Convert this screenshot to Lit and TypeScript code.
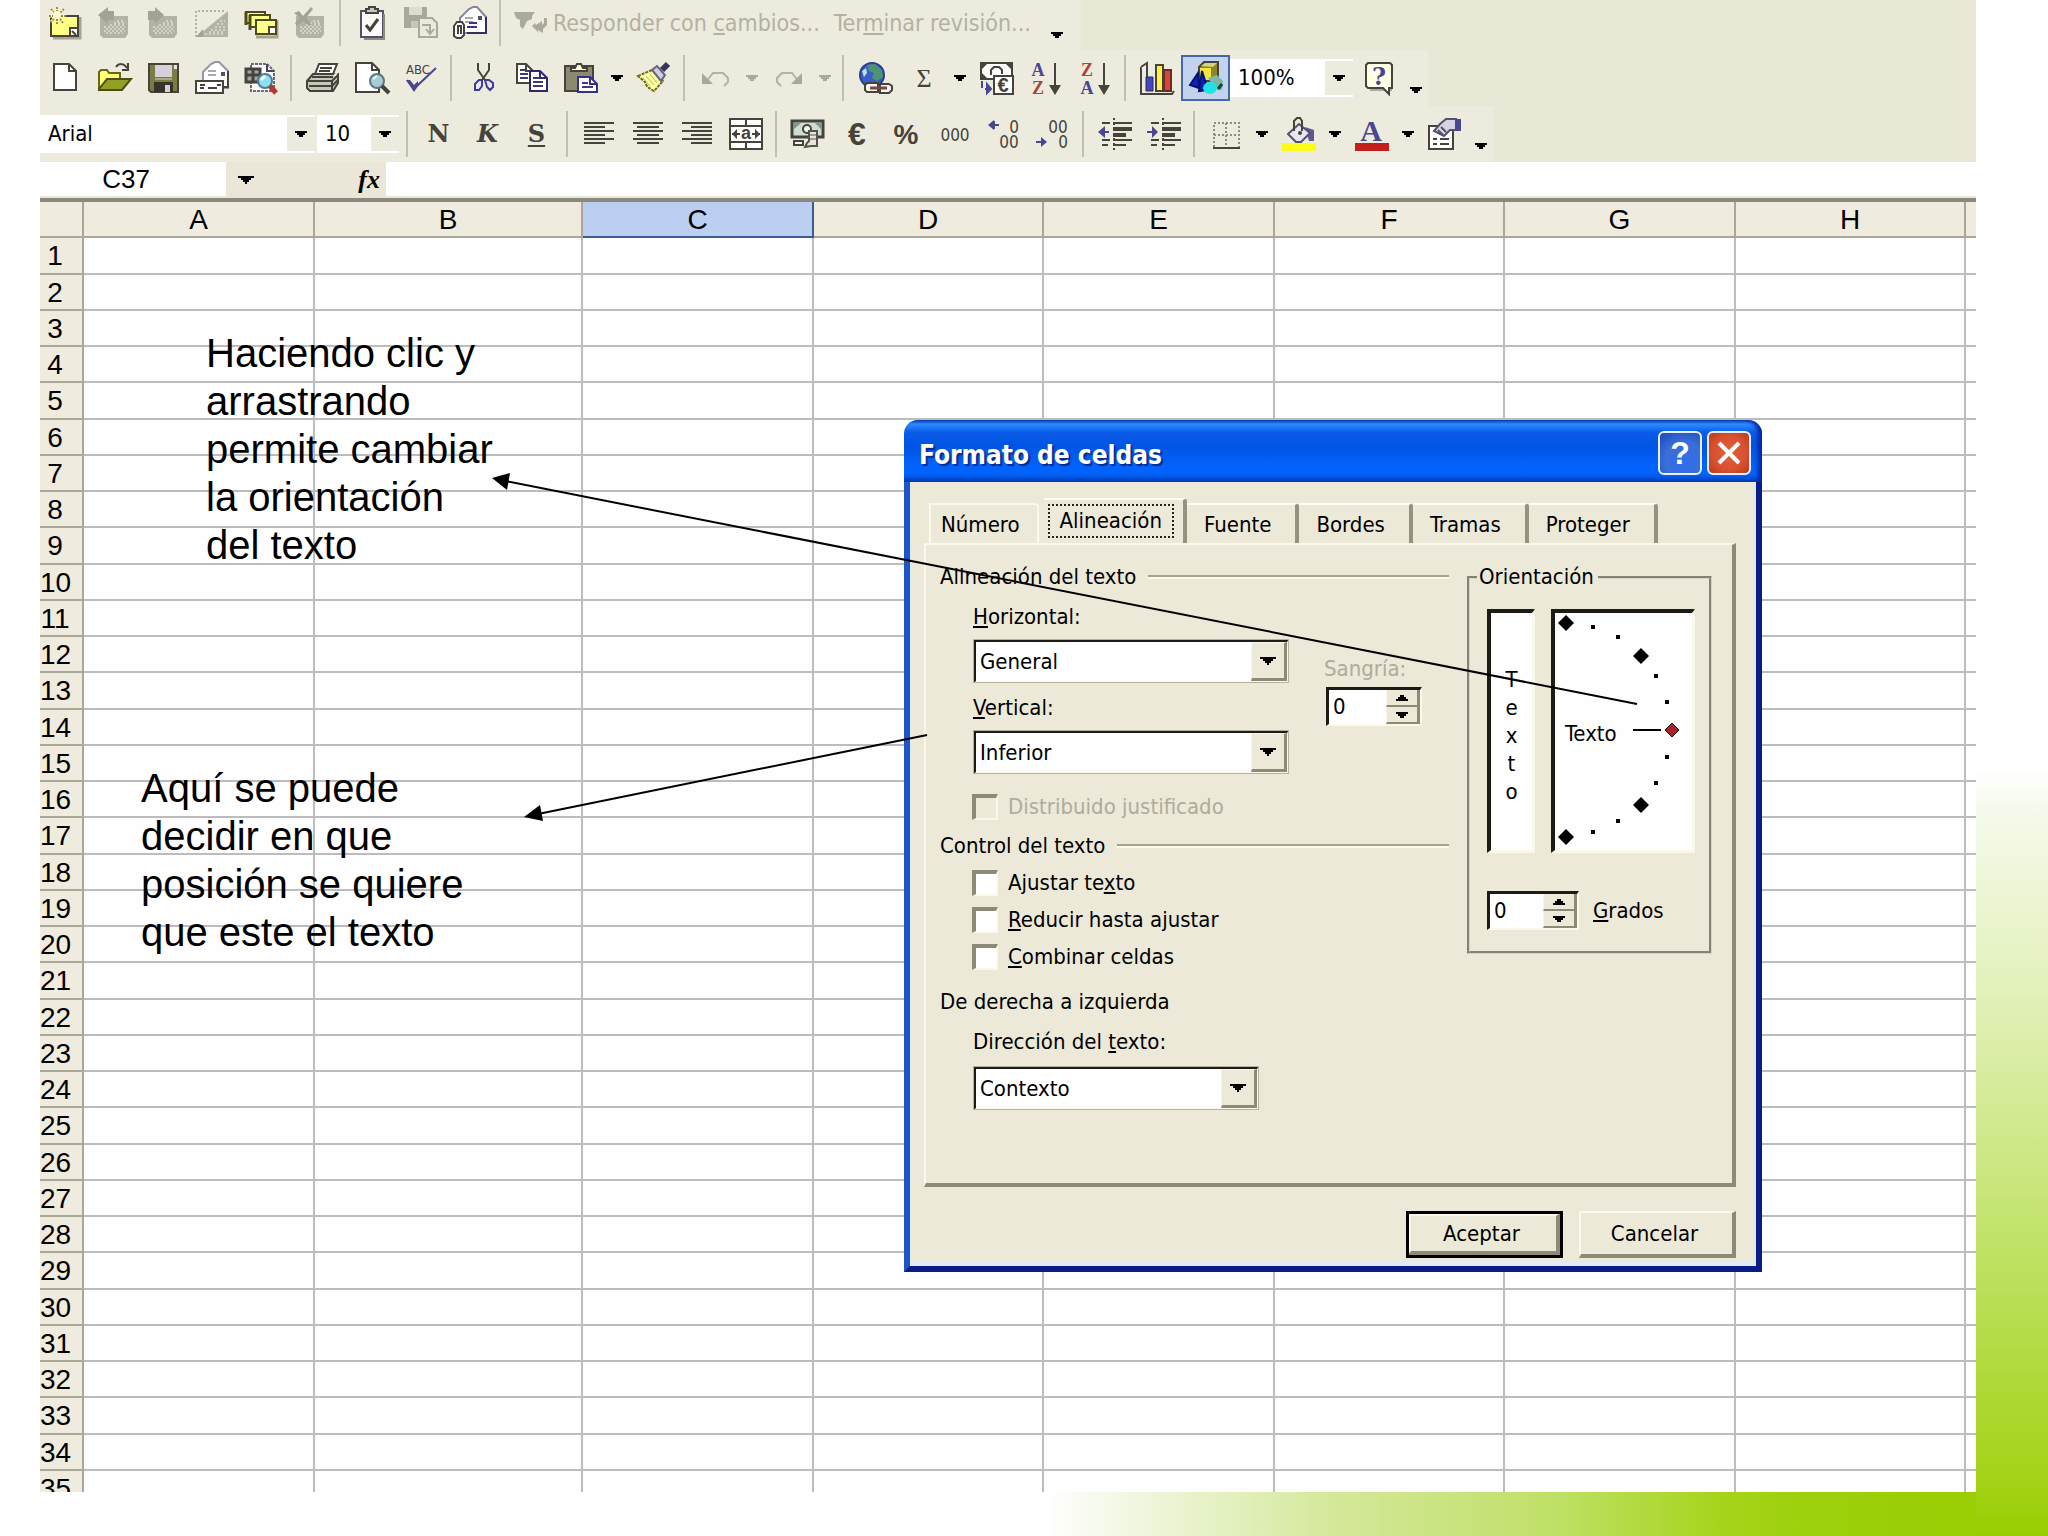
import { LitElement, html, svg, css, type SVGTemplateResult, type TemplateResult } from "lit";
import { customElement, property, state } from "lit/decorators.js";
import { classMap } from "lit/directives/class-map.js";

const uiFont = css`"DejaVu Sans Condensed", "DejaVu Sans", sans-serif`;
const gridFont = css`"Liberation Sans", Arial, sans-serif`;

const INK = "#45433a";
const OFF = "#b3b2a3";
const BLUE = "#4a4690";
const RED = "#a8453c";

/* Grey note card used by the disabled comment commands. */
const greyNote = (extra: SVGTemplateResult) => svg`
  <path d="M3 10H31V28L28 32H6L3 29Z" fill=${OFF}/>
  <path d="M7 21H28M9 23H28M7 25H28M9 27H26M13 19H28M17 17H28M20 15H28" stroke="#f4f3ea" stroke-width="1" stroke-dasharray="2 2"/>
  ${extra}`;

const page = (x: number, y: number, w: number, h: number, color = INK) => svg`
  <path d="M${x} ${y}H${x + w - 7}L${x + w} ${y + 7}V${y + h}H${x}Z" fill="#fff" stroke=${color} stroke-width="2"/>
  <path d="M${x + w - 7} ${y}V${y + 7}H${x + w}" fill="none" stroke=${color} stroke-width="2"/>`;

/* Letters that belong to an icon. */
const glyph = (x: number, y: number, cls: string, text: string, color = INK) =>
  svg`<text class=${cls} x=${x} y=${y} fill=${color} text-anchor="middle">${text}</text>`;

const ICONS: Record<string, SVGTemplateResult> = {
  newComment: svg`
    <path d="M5 32H32V11" fill="none" stroke="#a5a492" stroke-width="3"/>
    <path d="M3 10H30V30H3Z" fill="#ffff86" stroke=${INK} stroke-width="2"/>
    <path d="M22 22H30V30H22Z" fill="#fff" stroke=${INK} stroke-width="2"/>
    <path d="M24 25L28 29" stroke=${INK} stroke-width="2"/>
    <path d="M9 1V18M1 10H18M3 3L15 17M16 3L3 16" stroke="#fffbd0" stroke-width="3"/>
    <path d="M9 1V5M9 13V18M1 10H5M13 10H18M3 3L6 6M12 13L15 17M16 3L12 7M6 13L3 16" stroke="#a08c30" stroke-width="2" stroke-dasharray="2 1"/>`,
  prevComment: greyNote(svg`<path d="M1 9L11 1V5H17V14H11V18Z" fill="#a3a294"/>`),
  nextComment: greyNote(svg`<path d="M18 9L9 1V5H2V14H9V18Z" fill="#a3a294"/>`),
  showComment: svg`
    <path d="M33 5V31H1Z" fill=${OFF}/>
    <path d="M1 31V5H31" fill="none" stroke=${OFF} stroke-width="2" stroke-dasharray="2 2"/>
    <path d="M10 28H30M14 26H30M16 24H30M20 21H30M22 18H30M25 15H30" stroke="#f4f3ea" stroke-width="1" stroke-dasharray="2 2"/>
    <path d="M1 31L8 23V31Z" fill="#a3a294"/>`,
  allComments: svg`
    <path d="M12 31H33V14" fill="none" stroke="#a5a492" stroke-width="3"/>
    <path d="M2 6H21V17H2Z" fill="#ffff8c" stroke="#4c4a16" stroke-width="2"/>
    <path d="M6 9H26V21H6Z" fill="#ffff8c" stroke="#4c4a16" stroke-width="2"/>
    <path d="M12 14H32V28H12Z" fill="#ffff8c" stroke="#4c4a16" stroke-width="2"/>
    <path d="M25 21H32V28H25Z" fill="#fff" stroke="#4c4a16" stroke-width="2"/>
    <path d="M2 6V19M6 9V24" stroke="#4c4a16" stroke-width="3"/>`,
  deleteComment: greyNote(svg`<path d="M1 7L6 5L10 10L18 1L20 3L13 12L19 19L15 19L10 15L4 20L2 17L7 12Z" fill="#a3a294"/>`),
  task: svg`
    <path d="M6 5H28V31H6Z" fill="#fffafa" stroke="#55506a" stroke-width="2"/>
    <path d="M29 8V33H9" fill="none" stroke="#8e8c84" stroke-width="2"/>
    <path d="M11 3H14V1H20V3H23V7H11Z" fill="#c9c8c0" stroke=${INK} stroke-width="2"/>
    <path d="M11 19L15 24L23 13" fill="none" stroke=${INK} stroke-width="3"/>`,
  updateFile: svg`
    <path d="M0 1H23V22H0Z" fill="#a9a899"/>
    <path d="M5 1H18V9H5Z" fill="#dddccf"/><path d="M7 15H16V22H7Z" fill="#c7c6b8"/>
    <path d="M15 12H28L33 17V31H15Z" fill="#eceadd" stroke="#a9a899" stroke-width="2"/>
    <path d="M18 19H26V26M22 23L26 28L30 23" fill="none" stroke="#a9a899" stroke-width="2"/>`,
  mailAttach: svg`
    <path d="M7 12L16 3L20 1H24L33 11V27H7Z" fill="#fff" stroke="#8883a6" stroke-width="2"/>
    <path d="M33 11V27H14" fill="none" stroke="#34305c" stroke-width="2"/>
    <path d="M12 12H20M12 16H20" stroke="#aaa" stroke-width="2"/><path d="M14 21H24M16 17H24" stroke="#3c3880" stroke-width="2"/>
    <path d="M25 10H29V14H25Z" fill="#55506a"/>
    <path d="M1 30V20L4 16H9L11 19V29L8 32H4Z" fill="#fff" stroke=${INK} stroke-width="2"/>
    <path d="M5 28V20H8V28" fill="none" stroke=${INK} stroke-width="2"/>`,
  reply: svg`
    <path d="M1 6H22L19 10V13L14 15L10 23L7 20V14L3 12Z" fill="#aaa99a"/>
    <path d="M34 12V19L30 23V27L20 21L29 15V19L31 17V12Z" fill="#aaa99a"/>
    <path d="M19 20L22 17L26 27Z" fill="#aaa99a"/>`,
  file: page(6, 3, 22, 26),
  open: svg`
    <path d="M2 28V11L4 9H10L12 12H23V28Z" fill="#ffff74" stroke="#66681c" stroke-width="2"/>
    <path d="M2 28L10 18H34L25 29H2Z" fill="#93a024" stroke="#4c4e14" stroke-width="2"/>
    <path d="M19 6C22 2 27 2 30 7M31 2V9H25" fill="none" stroke=${INK} stroke-width="2"/>`,
  save: svg`
    <path d="M3 3H32V31H5L3 29Z" fill="#7d7c45" stroke=${INK} stroke-width="2"/>
    <path d="M9 4H26V16H9Z" fill="#d6d0dc"/><path d="M28 4H31V8H28Z" fill="#e8e5ea"/>
    <path d="M8 21H27V31H8Z" fill="#35332a"/><path d="M19 24H24V31H19Z" fill="#d6d0dc"/>
    <path d="M9 18H26" stroke="#a9a880" stroke-width="2"/>`,
  mail: svg`
    <path d="M8 11L16 3L20 1H24L33 10V27H8Z" fill="#fff" stroke="#9894a6" stroke-width="2"/>
    <path d="M33 10V26H28" fill="none" stroke=${INK} stroke-width="2"/>
    <path d="M13 10H21M13 14H21" stroke="#aaa" stroke-width="2"/><path d="M26 11H30V15H26Z" fill="#55506a"/>
    <path d="M1 20H28V32H1Z" fill="#fff" stroke=${INK} stroke-width="2"/>
    <path d="M5 24H10M5 27H9M13 27H22M22 24H26" stroke=${INK} stroke-width="2"/>`,
  search: svg`
    <path d="M7 3H23L30 10V30H7Z" fill="#fff" stroke="#6d6a78" stroke-width="2" stroke-dasharray="3 1"/>
    <path d="M23 3V10H30" fill="none" stroke="#45436a" stroke-width="2"/>
    <path d="M2 8H16V21H2Z" fill="#a4a3ac" stroke=${INK} stroke-width="3"/><path d="M9 8V21M2 14H16" stroke=${INK} stroke-width="3"/>
    <circle cx="21" cy="20" r="7" fill="#8fe0ee" stroke="#4b7f95" stroke-width="2"/>
    <path d="M17 19L21 15" stroke="#fff" stroke-width="3"/>
    <path d="M26 25L32 32" stroke="#b0392f" stroke-width="5"/>`,
  print: svg`
    <path d="M9 13L13 3H31L27 13Z" fill="#fff" stroke=${INK} stroke-width="2"/>
    <path d="M14 7H26M13 10H24" stroke=${INK} stroke-width="2"/>
    <path d="M1 20L7 13H32V22L27 30H4L1 27Z" fill="#c9c7ba" stroke=${INK} stroke-width="2"/>
    <path d="M2 20H26L32 14M3 25H26L32 19M26 20V29M6 16H27" fill="none" stroke=${INK} stroke-width="2"/>
    <path d="M28 15L31 12" stroke="#eee" stroke-width="2"/>`,
  preview: svg`
    ${page(1, 2, 23, 29)}
    <circle cx="22" cy="20" r="7" fill="#a9ccd4" stroke="#5a7785" stroke-width="2"/>
    <path d="M18 18L22 15" stroke="#e6f6fa" stroke-width="2"/>
    <path d="M27 25L34 32" stroke=${INK} stroke-width="4"/>`,
  spelling: svg`
    ${glyph(14, 13, "abc", "ABC")}
    <path d="M3 19L10 28L14 24L32 7" fill="none" stroke="#4a468e" stroke-width="2"/>
    <path d="M2 19H6L10 24L14 20V25L10 31Z" fill="#4a468e"/>`,
  cut: svg`
    <path d="M12 2V9L19 19M23 2V9L16 19" fill="none" stroke=${INK} stroke-width="2"/>
    <path d="M16 19H13L9 23V29H13L16 25ZM19 19L21 26L24 29L27 26V22L23 19Z" fill="#e8e8fb" stroke="#3d3a98" stroke-width="2"/>`,
  copy: svg`
    ${page(2, 3, 16, 19)}
    <path d="M5 9H11M5 13H13M5 17H13" stroke="#3d3a70" stroke-width="2"/>
    ${page(15, 10, 17, 20, "#2c2970")}
    <path d="M18 17H24M18 21H28M18 25H28" stroke="#3d3a70" stroke-width="2"/>`,
  paste: svg`
    <path d="M1 5H29V30H1Z" fill="#8b8a70" stroke=${INK} stroke-width="2"/>
    <path d="M7 10V7H11L13 3H17L19 7H23V10Z" fill="#fffde0" stroke=${INK} stroke-width="2"/>
    ${page(14, 16, 19, 15, "#35318c")}
    <path d="M18 22H24M18 26H29" stroke="#3d3a90" stroke-width="2"/>`,
  brush: svg`
    <path d="M1 15L15 9L26 20L17 30Q9 26 8 21Z" fill="#ffffa4" stroke="#6c6a1c" stroke-width="2" stroke-dasharray="3 1"/>
    <path d="M9 15L17 24M13 13L20 22M6 17L13 25" stroke="#b8b560" stroke-width="1"/>
    <path d="M15 9L20 5L28 14L24 20Z" fill="#d0cde0" stroke="#66637c" stroke-width="2"/>
    <path d="M25 9L31 3" stroke="#37345c" stroke-width="6"/>`,
  undo: svg`
    <path d="M7 21L14 12H24L29 17V21L25 25" fill="none" stroke=${OFF} stroke-width="2"/>
    <path d="M3 12V23H14Z" fill="#a9a899"/>`,
  redo: svg`
    <path d="M27 21L20 12H10L5 17V21L9 25" fill="none" stroke=${OFF} stroke-width="2"/>
    <path d="M30 12V23H19Z" fill="#a9a899"/>`,
  globe: svg`
    <circle cx="14" cy="14" r="12" fill="#3a5fc4" stroke="#2b3f8a" stroke-width="2"/>
    <path d="M9 4L17 3L24 9L25 16L19 20L14 17L16 12L11 10Z" fill="#4d9473"/><path d="M4 10L8 7L9 12L6 16Z" fill="#bcdcf2"/>
    <path d="M9 22H20V31H9L7 29V24ZM22 23H31L34 25V29L31 32H22Z" fill="#f4f3ec" stroke=${INK} stroke-width="2"/>
    <path d="M12 27H29" stroke="#7d4545" stroke-width="3"/>`,
  sum: glyph(17, 26, "sum", "Σ"),
  euroConvert: svg`
    <path d="M1 2H32V18H1Z" fill="#fff" stroke=${INK} stroke-width="2"/>
    <path d="M2 3H7L2 8ZM31 3H26L31 8ZM2 17H7L2 12Z" fill=${INK}/>
    <path d="M11 14V9L14 6H19L22 9V13" fill="none" stroke=${INK} stroke-width="2"/>
    <path d="M14 15H33V33H14Z" fill="#fff" stroke=${INK} stroke-width="2"/>
    ${glyph(23, 31, "euro-small", "€")}
    <path d="M2 20V27M5 28H10M7 23L11 28L7 32Z" fill=${BLUE} stroke=${BLUE} stroke-width="2"/>`,
  sortAsc: svg`
    ${glyph(9, 15, "sort", "A", BLUE)}${glyph(9, 33, "sort", "Z", RED)}
    <path d="M26 2V26" stroke=${INK} stroke-width="2"/><path d="M20 24H32L26 34Z" fill=${INK}/>`,
  sortDesc: svg`
    ${glyph(9, 15, "sort", "Z", RED)}${glyph(9, 33, "sort", "A", BLUE)}
    <path d="M26 2V26" stroke=${INK} stroke-width="2"/><path d="M20 24H32L26 34Z" fill=${INK}/>`,
  chart: svg`
    <path d="M1 6V33H32L34 30" fill="none" stroke=${INK} stroke-width="2"/>
    <path d="M1 6L7 2V16" fill="#eee" stroke=${INK} stroke-width="2"/>
    <path d="M6 16H13V30H6Z" fill="#4746b8" stroke="#25246c" stroke-width="1"/>
    <path d="M16 4H23V30H16Z" fill="#fff04a" stroke=${INK} stroke-width="2"/>
    <path d="M24 9H31V30H24Z" fill="#d8453c" stroke="#6e2b26" stroke-width="2"/>`,
  drawing: svg`
    <path d="M10 6L15 1H29V15L24 20H10Z" fill="#8c862a" stroke=${INK} stroke-width="2"/>
    <path d="M11 7H22V19H11Z" fill="#f0e63c"/><path d="M12 5L16 2H28L24 6Z" fill="#d8d47c"/>
    <path d="M1 24L9 12L10 27ZM10 30L13 10L19 29Z" fill="#0b22c4" stroke="#071270" stroke-width="2"/>
    <path d="M19 17L28 14L34 20L33 29L26 28Z" fill="#7fb5a6"/>
    <path d="M29 28L33 23" stroke="#0a4a40" stroke-width="3"/>
    <ellipse cx="21" cy="27" rx="7" ry="6" fill="#21e3e6"/>`,
  help: svg`
    <path d="M7 29H28V6" stroke="#aaa" stroke-width="2" fill="none"/>
    <path d="M5 2H27L29 4V27H26V33L20 27H5L3 25V4Z" fill="#ffffe6" stroke=${INK} stroke-width="2"/>
    ${glyph(16, 24, "ask", "?", BLUE)}`,
  alignLeft: svg`<path d="M2 6H32M2 10H23M2 14H32M2 18H23M2 22H32M2 26H23" stroke=${INK} stroke-width="2"/>`,
  alignCenter: svg`<path d="M2 6H32M6 10H28M2 14H32M6 18H28M2 22H32M6 26H28" stroke=${INK} stroke-width="2"/>`,
  alignRight: svg`<path d="M2 6H32M11 10H32M2 14H32M11 18H32M2 22H32M11 26H32" stroke=${INK} stroke-width="2"/>`,
  merge: svg`
    <path d="M1 2H33V32H1ZM1 9H33M1 25H33M17 2V9M17 25V32" fill="#fff" stroke=${INK} stroke-width="2"/>
    <path d="M3 17L8 12V22ZM31 17L26 12V22Z" fill=${INK}/><path d="M3 17H11M23 17H31" stroke=${INK} stroke-width="2"/>
    ${glyph(17, 22, "merge", "a")}`,
  currency: svg`
    <path d="M1 4H32V20H1Z" fill="#cfdcd2" stroke=${INK} stroke-width="3"/>
    <path d="M3 6L10 6L3 12ZM30 6L24 6L30 12Z" fill="#7d978a"/>
    <circle cx="16" cy="12" r="4" fill="#f4f3ea" stroke=${INK} stroke-width="2"/>
    <path d="M18 14H26V29H20L14 30L16 26L18 24Z" fill="#e8e6dc" stroke="#55534a" stroke-width="2"/>
    <path d="M19 18H25M19 22H25" stroke="#55534a" stroke-width="1"/>
    <path d="M3 24H12V28H3Z" fill="#f4f3ea" stroke=${INK} stroke-width="2"/>`,
  euro: glyph(17, 28, "euro", "€"),
  percent: glyph(17, 27, "percent", "%"),
  thousands: glyph(17, 24, "digits", "000"),
  moreDecimals: svg`
    <path d="M4 8H12M7 4V12" stroke=${BLUE} stroke-width="2"/><path d="M1 8L7 3V13Z" fill=${BLUE}/>
    ${glyph(27, 16, "digits", "0")}${glyph(22, 31, "digits", "00")}`,
  lessDecimals: svg`
    <path d="M0 25H8" stroke=${BLUE} stroke-width="2"/><path d="M11 25L5 20V30Z" fill=${BLUE}/>
    ${glyph(22, 16, "digits", "00")}${glyph(27, 31, "digits", "0")}`,
  outdent: svg`
    <path d="M4 6H12M15 6H34M4 23H12M15 23H34M4 28H10M15 28H28" stroke=${INK} stroke-width="2"/>
    <path d="M15 12H34M15 18H28" stroke=${INK} stroke-width="4"/><path d="M16 1V34" stroke=${INK} stroke-width="2" stroke-dasharray="2 3"/>
    <path d="M0 15L7 9V21Z" fill=${BLUE}/><path d="M4 15H11" stroke=${BLUE} stroke-width="2"/>`,
  indent: svg`
    <path d="M4 6H12M15 6H34M4 23H12M15 23H34M4 28H10M15 28H28" stroke=${INK} stroke-width="2"/>
    <path d="M15 12H34M15 18H28" stroke=${INK} stroke-width="4"/><path d="M16 1V34" stroke=${INK} stroke-width="2" stroke-dasharray="2 3"/>
    <path d="M11 15L5 9V21Z" fill=${BLUE}/><path d="M0 15H6" stroke=${BLUE} stroke-width="2"/>`,
  borders: svg`
    <path d="M5 30V6H30V30M17 6V30M5 18H30" fill="none" stroke="#8e8c80" stroke-width="2" stroke-dasharray="2 2"/>
    <path d="M4 31H31" stroke=${INK} stroke-width="2"/>`,
  bucket: svg`
    <path d="M0 26H34V34H0Z" fill="#fcfc1c"/>
    <path d="M23 10L32 13V24H27Z" fill="#5c5894"/>
    <path d="M6 17L17 7L28 16L19 25H14Z" fill="#e8e6f2" stroke="#55516e" stroke-width="2"/>
    <path d="M12 14V4L15 1H18L20 4V14" fill="none" stroke=${INK} stroke-width="2"/><circle cx="18" cy="16" r="2" fill=${INK}/>`,
  fontColor: svg`
    ${glyph(16, 24, "font-color", "A", BLUE)}
    <path d="M0 26H34V34H0Z" fill="#c2201c"/>`,
  props: svg`
    <path d="M1 9H25V32H1Z" fill="#fff" stroke=${INK} stroke-width="2"/>
    <path d="M5 22H9M12 22H21M5 27H9M12 27H21" stroke=${INK} stroke-width="2"/>
    <path d="M6 14L12 7L18 2H28V13H22L16 19Z" fill="#d7d4e0" stroke="#55516e" stroke-width="2"/>
    <path d="M30 2V14" stroke=${BLUE} stroke-width="6"/><path d="M10 13L15 18M13 10L18 15" stroke="#55516e" stroke-width="2"/>`,
};

const caret = (color = "#000") => html`<svg class="caret" viewBox="0 0 12 6" aria-hidden="true">
  <path d="M0 0H12V2H10V4H8V6H4V4H2V2H0Z" fill=${color} /></svg>`;

type Item =
  | { kind: "icon"; icon: string; name: string; off?: boolean; on?: boolean }
  | { kind: "drop"; name: string; off?: boolean }
  | { kind: "letter"; text: string; style: string; name: string }
  | { kind: "text"; content: TemplateResult; icon?: string }
  | { kind: "combo"; id: string; name: string; value: string }
  | { kind: "more"; name: string }
  | { kind: "sep" };

const icon = (i: string, name: string, extra: { off?: boolean; on?: boolean } = {}): Item => ({ kind: "icon", icon: i, name, ...extra });
const drop = (name: string, off = false): Item => ({ kind: "drop", name, off });
const SEP: Item = { kind: "sep" };

const REVIEW: Item[] = [
  icon("newComment", "Nuevo comentario"),
  icon("prevComment", "Comentario anterior", { off: true }),
  icon("nextComment", "Comentario siguiente", { off: true }),
  icon("showComment", "Mostrar comentario", { off: true }),
  icon("allComments", "Mostrar todos los comentarios"),
  icon("deleteComment", "Eliminar comentario", { off: true }),
  SEP,
  icon("task", "Crear tarea"),
  icon("updateFile", "Actualizar archivo", { off: true }),
  icon("mailAttach", "Enviar como datos adjuntos"),
  SEP,
  { kind: "text", icon: "reply", content: html`Responder con <u>c</u>ambios...` },
  { kind: "text", content: html`Ter<u>m</u>inar revisión...` },
  { kind: "more", name: "Opciones de revisión" },
];

const STANDARD: Item[] = [
  icon("file", "Nuevo"), icon("open", "Abrir"), icon("save", "Guardar"), icon("mail", "Correo"), icon("search", "Buscar"),
  SEP,
  icon("print", "Imprimir"), icon("preview", "Vista preliminar"), icon("spelling", "Ortografía"),
  SEP,
  icon("cut", "Cortar"), icon("copy", "Copiar"), icon("paste", "Pegar"), drop("Opciones de pegado"), icon("brush", "Copiar formato"),
  SEP,
  icon("undo", "Deshacer", { off: true }), drop("Lista de deshacer", true), icon("redo", "Rehacer", { off: true }), drop("Lista de rehacer", true),
  SEP,
  icon("globe", "Hipervínculo"), icon("sum", "Autosuma"), drop("Funciones"), icon("euroConvert", "Conversión a euros"),
  icon("sortAsc", "Orden ascendente"), icon("sortDesc", "Orden descendente"),
  SEP,
  icon("chart", "Asistente para gráficos"), icon("drawing", "Dibujo", { on: true }),
  { kind: "combo", id: "zoom", name: "Zoom", value: "100%" },
  icon("help", "Ayuda"),
  { kind: "more", name: "Opciones estándar" },
];

const FORMAT: Item[] = [
  { kind: "combo", id: "font", name: "Fuente", value: "Arial" },
  { kind: "combo", id: "size", name: "Tamaño", value: "10" },
  SEP,
  { kind: "letter", text: "N", style: "bold", name: "Negrita" },
  { kind: "letter", text: "K", style: "italic", name: "Cursiva" },
  { kind: "letter", text: "S", style: "under", name: "Subrayado" },
  SEP,
  icon("alignLeft", "Alinear a la izquierda"), icon("alignCenter", "Centrar"), icon("alignRight", "Alinear a la derecha"), icon("merge", "Combinar y centrar"),
  SEP,
  icon("currency", "Moneda"), icon("euro", "Euro"), icon("percent", "Porcentual"), icon("thousands", "Estilo millares"),
  icon("moreDecimals", "Aumentar decimales"), icon("lessDecimals", "Disminuir decimales"),
  SEP,
  icon("outdent", "Disminuir sangría"), icon("indent", "Aumentar sangría"),
  SEP,
  icon("borders", "Bordes"), drop("Tipos de borde"), icon("bucket", "Color de relleno"), drop("Colores de relleno"),
  icon("fontColor", "Color de fuente"), drop("Colores de fuente"), icon("props", "Propiedades"),
  { kind: "more", name: "Opciones de formato" },
];

@customElement("tool-bar")
class ToolBar extends LitElement {
  @property({ attribute: false }) items: Item[] = [];

  static styles = css`
    :host { display: flex; align-items: center; height: 56px; background: #edebdd; font: 22px/30px ${uiFont}; color: #000; }
    button { appearance: none; border: 0; margin: 0; padding: 0; background: none; font: inherit; color: inherit; flex: none; }
    .icon { width: 49px; height: 46px; display: grid; place-items: center; }
    .icon svg, .text svg { width: 34px; height: 34px; display: block; overflow: visible; }
    .abc { font-size: 13px; font-weight: 400; }
    .sum { font: 26px "Liberation Serif", serif; }
    .sort { font: bold 18px "Liberation Serif", serif; }
    .digits { font-size: 17px; }
    .percent { font: bold 28px ${gridFont}; }
    .euro { font: bold 32px ${gridFont}; }
    .euro-small { font: bold 20px ${gridFont}; }
    .merge { font: bold 18px ${gridFont}; }
    .ask { font: bold 24px "DejaVu Serif", serif; }
    .font-color { font: bold 30px "Liberation Serif", serif; }
    .on { background: #c3d2ee; border: 2px solid #4468a8; }
    .drop { width: 24px; height: 46px; display: grid; place-items: center; }
    .more { width: 24px; height: 46px; display: grid; place-items: end center; padding-bottom: 8px; }
    .caret { width: 12px; height: 6px; display: block; }
    .sep { width: 2px; height: 46px; margin: 0 6px 0 5px; background: #c1bfb1; flex: none; }
    .text { display: flex; align-items: center; color: #b3b1a2; font-size: 23px; height: 46px; margin-right: 14px; white-space: nowrap; }
    .text svg { margin: 0 6px; }
    .letter { width: 49px; height: 46px; font: bold 24px/30px "DejaVu Serif", serif; color: #45433a; }
    .italic { font-style: italic; }
    .under { text-decoration: underline; text-decoration-thickness: 2px; text-underline-offset: 3px; }
    .combo { display: grid; grid-template-columns: 1fr 28px; align-items: center; height: 38px; background: #fff; margin-right: 2px; flex: none; }
    .combo select { grid-area: 1 / 1 / 2 / 3; appearance: none; border: 0; margin: 0; padding: 0 0 0 8px; background: none; font: inherit; color: inherit; height: 38px; width: 100%; }
    .knob { grid-area: 1 / 2; height: 34px; background: #edebdd; display: grid; place-items: center; pointer-events: none; }
    .font { width: 275px; }
    .size { width: 82px; }
    .zoom { width: 123px; }
  `;

  private item(i: Item) {
    switch (i.kind) {
      case "icon":
        return html`<button class=${classMap({ icon: true, on: !!i.on })} aria-label=${i.name} ?disabled=${!!i.off}>
          <svg viewBox="0 0 34 34" aria-hidden="true">${ICONS[i.icon]}</svg></button>`;
      case "drop":
        return html`<button class="drop" aria-label=${i.name} ?disabled=${!!i.off}>${caret(i.off ? "#aaa99a" : "#000")}</button>`;
      case "letter":
        return html`<button class="letter ${i.style}" aria-label=${i.name}>${i.text}</button>`;
      case "text":
        return html`<button class="text" disabled>
          ${i.icon ? html`<svg viewBox="0 0 34 34" aria-hidden="true">${ICONS[i.icon]}</svg>` : ""}<span>${i.content}</span></button>`;
      case "combo":
        return html`<div class="combo ${i.id}"><select aria-label=${i.name}><option>${i.value}</option></select>
          <span class="knob">${caret()}</span></div>`;
      case "more":
        return html`<button class="more" aria-label=${i.name}>${caret()}</button>`;
      default:
        return html`<span class="sep"></span>`;
    }
  }

  render() {
    return this.items.map((i) => this.item(i));
  }
}

@customElement("sheet-grid")
class SheetGrid extends LitElement {
  @property({ type: Number }) rows = 35;
  @property() selected = "C";
  private columns = ["A", "B", "C", "D", "E", "F", "G", "H"];

  static styles = css`
    :host { display: block; overflow: hidden; background: #fefefe; }
    table { width: 100%; border-collapse: separate; border-spacing: 0; table-layout: fixed; font: 28px/30px ${gridFont}; color: #000; }
    col { width: 231px; }
    col:nth-child(odd) { width: 230px; }
    col.gutter { width: 44px; }
    col.wide { width: 268px; }
    col.rest { width: auto; }
    th, td { box-sizing: border-box; padding: 0; border: 0 solid #bcbbbe; border-width: 0 2px 2px 0; overflow: hidden; }
    tr { height: 36px; }
    tbody tr:nth-child(4n + 1) { height: 37px; }
    th { font-weight: 400; background: #efecdf; border-color: #a9a798; padding-top: 1px; }
    tbody th { padding-right: 12px; }
    .sel { background: #bdcff0; border-color: #3e5c94; }
    td:last-child, thead th:last-child { border-right: 0; }
  `;

  render() {
    const numbers = Array.from({ length: this.rows }, (_, i) => i + 1);
    return html`<table>
      <colgroup>
        <col class="gutter" />
        ${this.columns.map((c) => html`<col class=${classMap({ wide: c === "B" })} />`)}
        <col class="rest" />
      </colgroup>
      <thead><tr><th></th>
        ${this.columns.map((c) => html`<th scope="col" class=${classMap({ sel: c === this.selected })}>${c}</th>`)}<th></th>
      </tr></thead>
      <tbody>${numbers.map((n) => html`<tr><th scope="row">${n}</th>${this.columns.map(() => html`<td></td>`)}<td></td></tr>`)}</tbody>
    </table>`;
  }
}

const TABS = ["Número", "Alineación", "Fuente", "Bordes", "Tramas", "Proteger"];
const DIAMONDS = [[15, 14], [90, 47], [90, 196], [15, 228]];
const DOTS = [[42, 18], [67, 28], [105, 67], [116, 93], [116, 148], [105, 174], [67, 212], [42, 223]];

@customElement("format-dialog")
class FormatDialog extends LitElement {
  @state() private tab = "Alineación";

  static styles = css`
    :host { display: block; font: 22px/30px ${uiFont}; color: #000; }
    button, input, select { appearance: none; font: inherit; color: inherit; margin: 0; padding: 0; border: 0; border-radius: 0; box-sizing: border-box; }
    .title { display: flex; align-items: center; gap: 5px; height: 62px; box-sizing: border-box; padding: 4px 11px 0 15px; border-radius: 14px 14px 0 0;
      background: linear-gradient(#0a4cc0, #2f8cff 4px, #0b5ce8 12px, #0054e3 26px, #0263fc 46px, #0263fc 54px, #0440c0); box-shadow: inset -4px 0 4px #0626a0; }
    h2 { flex: 1; margin: 0; padding-top: 4px; font-size: 26px; line-height: 32px; font-weight: 700; color: #fff; text-shadow: 2px 2px 1px #0a2a8c; }
    .cap { width: 44px; height: 44px; border: 2px solid #e8f0ff; border-radius: 6px; display: grid; place-items: center; }
    .cap svg { width: 28px; height: 28px; }
    .cap text { font: bold 32px ${gridFont}; }
    .ask { background: radial-gradient(circle at 60% 70%, #2f6cf0, #3a6fd8 50%, #1c48b8); }
    .close { background: radial-gradient(circle at 50% 50%, #e2603c, #d9502f 60%, #b83a1c); }
    .frame { border: 6px solid #0b1c84; border-top: 0; border-left-color: #1e55c8; background: #ece9d8; box-shadow: inset 2px 0 #dfeafa, inset 0 -4px #dfeafa, inset -2px 0 #dfeafa; padding: 16px 20px 8px 14px; }
    .tabs { display: flex; align-items: flex-end; padding-left: 5px; }
    .tab { height: 40px; padding: 2px 24px 0 17px; background: none; border-top: 2px solid #fffef4; border-right: 4px solid #94917e; border-top-right-radius: 4px; }
    .tab.first { padding: 2px 17px 0 10px; border: 2px solid #fbf9ea; border-width: 2px 2px 0 2px; margin-right: 5px; }
    .tab.active { height: 45px; padding: 3px 9px 4px 4px; }
    .tab.active span { display: block; padding: 0 10px; border: 2px dotted #222; }
    .panel { display: grid; grid-template-columns: 1fr 245px; column-gap: 18px; align-items: start; box-sizing: border-box; min-height: 644px; padding: 17px 20px 0 14px;
      border: solid; border-width: 2px 4px 4px 2px; border-color: #fbf9ea #8d8a76 #8d8a76 #fbf9ea; }
    .group { display: flex; align-items: center; gap: 12px; }
    .group.ruled::after { content: ""; flex: 1; height: 2px; background: #a5a290; border-bottom: 2px solid #fbf9ea; }
    .indent { padding-left: 33px; }
    .pair { display: flex; gap: 35px; padding-top: 10px; }
    .fields { width: 316px; display: flex; flex-direction: column; }
    .fields label + .combo { margin-top: 7px; }
    .fields .combo + label { margin-top: 10px; }
    .side { padding-top: 52px; color: #aeac9c; }
    .side .spin { color: #000; margin: 3px 0 0 2px; }
    .combo { display: grid; grid-template-columns: 1fr 36px; height: 44px; background: #fff; box-sizing: border-box; border: solid; border-width: 3px 2px 2px 3px; border-color: #1c1b16 #fbf9ea #fbf9ea #1c1b16; outline: 1px solid #b5b29f; outline-offset: -1px; }
    .combo select { grid-area: 1 / 1 / 2 / 3; background: none; padding-left: 4px; width: 100%; }
    .knob { grid-area: 1 / 2; display: grid; place-items: center; pointer-events: none; background: #ece9d8; border: solid; border-width: 1px 3px 3px 1px; border-color: #f8f6e8 #8d8a76 #8d8a76 #f8f6e8; }
    .caret { display: block; width: 16px; height: 8px; }
    .spin { display: grid; grid-template-columns: 1fr 34px; grid-template-rows: 1fr 1fr; width: 96px; height: 39px; box-sizing: border-box; background: #fff; border: solid; border-width: 3px 2px 2px 3px; border-color: #1c1b16 #fbf9ea #fbf9ea #1c1b16; }
    .spin input { grid-row: 1 / 3; width: 100%; padding-left: 4px; background: none; appearance: textfield; }
    .spin input::-webkit-inner-spin-button { display: none; }
    .spin button { display: grid; place-items: center; background: #ece9d8; border: solid; border-width: 0 3px 2px 1px; border-color: #f8f6e8 #8d8a76 #8d8a76 #f8f6e8; }
    .spin svg { width: 12px; height: 6px; display: block; }
    .check { display: flex; align-items: center; gap: 10px; margin-top: 7px; padding-left: 32px; }
    .check input { width: 26px; height: 26px; background: #fff; border: solid; border-width: 4px 2px 2px 4px; border-color: #8d8a76 #fbf9ea #fbf9ea #8d8a76; }
    .off { color: #aeac9c; margin-top: 18px; }
    .off input { background: #ece9d8; }
    .control { margin-top: 9px; }
    .rtl { margin-top: 15px; }
    .dir { padding-top: 10px; display: flex; flex-direction: column; gap: 9px; }
    .dir .combo { width: 286px; }
    fieldset { margin: 0; min-width: 0; padding: 17px 14px 21px 17px; border: 3px groove #d8d5c2; box-sizing: border-box; }
    legend { padding: 0 4px 0 2px; margin-left: -10px; }
    .dials { display: flex; gap: 16px; height: 244px; }
    .well { background: #fefefe; border: solid; border-width: 4px 3px 3px 4px; border-color: #1c1b16 #fbf9ea #fbf9ea #1c1b16; box-sizing: border-box; }
    .vertical { width: 48px; display: flex; flex-direction: column; justify-content: center; align-items: center; line-height: 28px; padding-top: 8px; }
    .dial { flex: 1; }
    .dial svg { display: block; overflow: visible; }
    .degrees { display: flex; align-items: center; gap: 14px; padding-top: 38px; }
    .degrees .spin { width: 92px; }
    .actions { display: flex; justify-content: flex-end; gap: 16px; padding-top: 24px; }
    .push { width: 157px; height: 47px; background: #ece9d8; border: solid; border-width: 2px 4px 4px 2px; border-color: #fbf9ea #8d8a76 #8d8a76 #fbf9ea; padding-right: 4px; }
    .push.main { outline: 3px solid #000; outline-offset: -3px; border-width: 5px 7px 7px 5px; }
  `;

  private bigCaret = html`<svg class="caret" viewBox="0 0 16 8" aria-hidden="true"><path d="M0 0H16V2H13V4H11V6H9V8H7V6H5V4H3V2H0Z" /></svg>`;

  private combo(id: string, value: string) {
    return html`<div class="combo"><select id=${id}><option>${value}</option></select><span class="knob">${this.bigCaret}</span></div>`;
  }

  private spin(id: string, off = false) {
    return html`<div class="spin"><input id=${id} type="number" value="0" />
      <button aria-label="Aumentar" ?disabled=${off}><svg viewBox="0 0 12 6"><path d="M0 6H12V4H10V2H8V0H4V2H2V4H0Z" fill="#000" /></svg></button>
      <button aria-label="Disminuir" ?disabled=${off}><svg viewBox="0 0 12 6"><path d="M0 0H12V2H10V4H8V6H4V4H2V2H0Z" fill="#000" /></svg></button></div>`;
  }

  private check(id: string, label: TemplateResult, off = false) {
    return html`<div class=${classMap({ check: true, off })}><input type="checkbox" id=${id} ?disabled=${off} /><label for=${id}>${label}</label></div>`;
  }

  render() {
    return html`
      <header class="title">
        <h2>Formato de celdas</h2>
        <button class="cap ask" aria-label="Ayuda"><svg viewBox="0 0 28 28"><text x="14" y="25" text-anchor="middle" fill="#fff">?</text></svg></button>
        <button class="cap close" aria-label="Cerrar"><svg viewBox="0 0 28 28"><path d="M4 4L24 24M24 4L4 24" stroke="#fff" stroke-width="4" /></svg></button>
      </header>
      <div class="frame">
        <div class="tabs" role="tablist">
          ${TABS.map((t, i) => html`<button role="tab" aria-selected=${t === this.tab ? "true" : "false"}
            class=${classMap({ tab: true, first: i === 0, active: t === this.tab })}><span>${t}</span></button>`)}
        </div>
        <div class="panel">
          <div>
            <div class="group ruled">Alineación del texto</div>
            <div class="pair indent">
              <div class="fields">
                <label for="h"><u>H</u>orizontal:</label>${this.combo("h", "General")}
                <label for="v"><u>V</u>ertical:</label>${this.combo("v", "Inferior")}
              </div>
              <div class="side"><label for="s">Sangría:</label>${this.spin("s", true)}</div>
            </div>
            ${this.check("dj", html`Distribuido justificado`, true)}
            <div class="group ruled control">Control del texto</div>
            ${this.check("aj", html`Ajustar te<u>x</u>to`)}
            ${this.check("re", html`<u>R</u>educir hasta ajustar`)}
            ${this.check("co", html`<u>C</u>ombinar celdas`)}
            <div class="group rtl">De derecha a izquierda</div>
            <div class="dir indent"><label for="d">Dirección del <u>t</u>exto:</label>${this.combo("d", "Contexto")}</div>
          </div>
          <fieldset>
            <legend>Orientación</legend>
            <div class="dials">
              <div class="well vertical">${"Texto".split("").map((c) => html`<span>${c}</span>`)}</div>
              <div class="well dial">
                <svg width="134" height="236" viewBox="4 4 134 236">
                  ${DIAMONDS.map(([x, y]) => svg`<path d="M${x - 8} ${y}L${x} ${y - 8}L${x + 8} ${y}L${x} ${y + 8}Z" />`)}
                  ${DOTS.map(([x, y]) => svg`<path d="M${x - 2} ${y - 2}h4v4h-4Z" />`)}
                  <path d="M82 121H110" stroke="#000" stroke-width="2" />
                  <path d="M114 121L121 114L128 121L121 128Z" fill="#a3242a" stroke="#1c0a0a" stroke-width="1" />
                  <text x="14" y="132">Texto</text>
                </svg>
              </div>
            </div>
            <div class="degrees">${this.spin("g")}<label for="g"><u>G</u>rados</label></div>
          </fieldset>
        </div>
        <div class="actions"><button class="push main">Aceptar</button><button class="push">Cancelar</button></div>
      </div>`;
  }
}

@customElement("app-root")
class AppRoot extends LitElement {
  static styles = css`
    :host { display: flex; flex-direction: column; position: relative; box-sizing: border-box; height: 100vh; padding: 0 72px 44px 40px; overflow: hidden;
      background:
        linear-gradient(#fff 50%, #f4faea 53%, #e2f0b8 65%, #c9e67c 77%, #b4dc48 87%, #a2d214 97%, #99cc00) right / 72px 100% no-repeat,
        linear-gradient(90deg, #fff 51%, #eef6dc 56%, #d5e89a 65%, #bfe066 76%, #a6d41c 84%, #9ed00c 88%, #99cc00) bottom / 100% 44px no-repeat,
        #fff; }
    .bars { background: #e9e8d7; display: flex; flex-direction: column; align-items: flex-start; }
    .review { height: 50px; padding-right: 12px; align-items: flex-start; }
    .formula { display: grid; grid-template-columns: 186px 40px 120px 1fr; align-items: center; height: 36px; background: #ebe7d8; border-bottom: 4px solid #8b897e; font: 26px/30px ${gridFont}; }
    .formula input { box-sizing: border-box; width: 100%; height: 34px; border: 0; margin: 0; padding: 0; background: #fff; font: inherit; color: #000; align-self: start; }
    .formula .name { text-align: center; padding-right: 14px; }
    .formula button { border: 0; margin: 0; padding: 0; background: none; display: grid; place-items: center; height: 34px; }
    .formula .fx { font: italic bold 26px/30px "Liberation Serif", serif; justify-content: end; padding-right: 6px; color: #000; }
    .formula svg { width: 16px; height: 8px; }
    sheet-grid { flex: 1; min-height: 0; }
    .note { position: absolute; margin: 0; font: 40px/48px ${gridFont}; color: #000; white-space: pre-line; }
    .first { left: 206px; top: 329px; }
    .second { left: 141px; top: 764px; }
    format-dialog { position: absolute; left: 904px; top: 420px; width: 858px; }
    .arrows { position: absolute; left: 0; top: 0; width: 100%; height: 100%; pointer-events: none; }
  `;

  render() {
    return html`
      <div class="bars">
        <tool-bar class="review" .items=${REVIEW}></tool-bar>
        <tool-bar .items=${STANDARD}></tool-bar>
        <tool-bar .items=${FORMAT}></tool-bar>
      </div>
      <div class="formula">
        <input class="name" aria-label="Cuadro de nombres" value="C37" />
        <button aria-label="Lista de nombres"><svg viewBox="0 0 16 8"><path d="M0 0H16V2H13V4H11V6H9V8H7V6H5V4H3V2H0Z" /></svg></button>
        <button class="fx" aria-label="Insertar función">fx</button>
        <input aria-label="Barra de fórmulas" />
      </div>
      <sheet-grid></sheet-grid>
      <p class="note first">${"Haciendo clic y\narrastrando\npermite cambiar\nla orientación\ndel texto"}</p>
      <p class="note second">${"Aquí se puede\ndecidir en que\nposición se quiere\nque este el texto"}</p>
      <format-dialog></format-dialog>
      <svg class="arrows" aria-hidden="true">
        <path d="M1637 704L505 481M927 735L538 814" stroke="#000" stroke-width="2" fill="none" />
        <path d="M492 478L510 473L507 490Z" /><path d="M524 817L540 805L543 821Z" />
      </svg>`;
  }
}
